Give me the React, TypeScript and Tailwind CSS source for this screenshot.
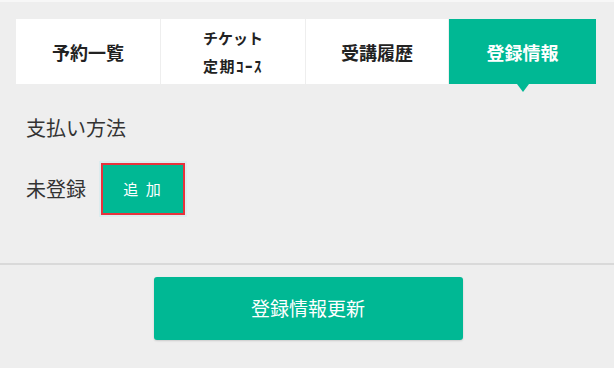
import React from "react"

const font = { fontFamily: '"Noto Sans CJK JP", "Noto Sans", sans-serif' }

const tabs = [
  { key: "reserve", lines: ["予約一覧"] },
  { key: "ticket", lines: ["チケット", "定期ｺｰｽ"] },
  { key: "history", lines: ["受講履歴"] },
  { key: "profile", lines: ["登録情報"] },
]

export default function App() {
  const active = "profile"

  return (
    <div className="w-[614px] h-[368px] bg-[#eeeeee] overflow-hidden" style={font}>
      <div className="h-[2px] bg-[#f7f7f7]" />

      {/* tabs */}
      <div className="ml-[16px] mt-[17px] grid grid-cols-[144px_144px_142px_147px] gap-px h-[65px]">
        {tabs.map(t => {
          const on = t.key === active
          return (
            <div
              key={t.key}
              className={
                on
                  ? "relative flex flex-col items-center justify-center bg-[#00b894] text-white font-bold"
                  : "relative flex flex-col items-center justify-center bg-white text-[#222222] font-bold"
              }
            >
              {t.lines.length === 1 ? (
                <span className="text-[18px] leading-none">{t.lines[0]}</span>
              ) : (
                <>
                  <span className="text-[15px] leading-[28px]">{t.lines[0]}</span>
                  <span className="text-[15px] leading-[28px] tracking-[1.5px]">{t.lines[1]}</span>
                </>
              )}
              {on && (
                <span className="absolute left-1/2 top-full -translate-x-1/2 w-0 h-0 border-l-[6px] border-r-[6px] border-t-[8px] border-l-transparent border-r-transparent border-t-[#00b894]" />
              )}
            </div>
          )
        })}
      </div>

      {/* payment */}
      <div className="px-[26px] pt-[30px]">
        <p className="text-[20px] leading-[28px] text-[#333333]">支払い方法</p>
        <div className="mt-[21px] flex items-center gap-[15px]">
          <span className="text-[20px] leading-[28px] text-[#333333]">未登録</span>
          <button className="w-[84px] h-[52px] bg-[#00b894] border-2 border-[#e8323c] shadow-[0_0_0_2px_#dcecee] text-white text-[15px] tracking-[2px]">
            追 加
          </button>
        </div>
      </div>

      <div className="mt-[48px] h-[2px] bg-[#d9d9d9]" />

      <div className="flex justify-center pt-[12px]">
        <button className="ml-[2px] w-[309px] h-[63px] rounded-[3px] bg-[#00b894] shadow-[0_1px_2px_rgba(0,0,0,0.15)] text-white text-[19px]">
          登録情報更新
        </button>
      </div>
    </div>
  )
}
